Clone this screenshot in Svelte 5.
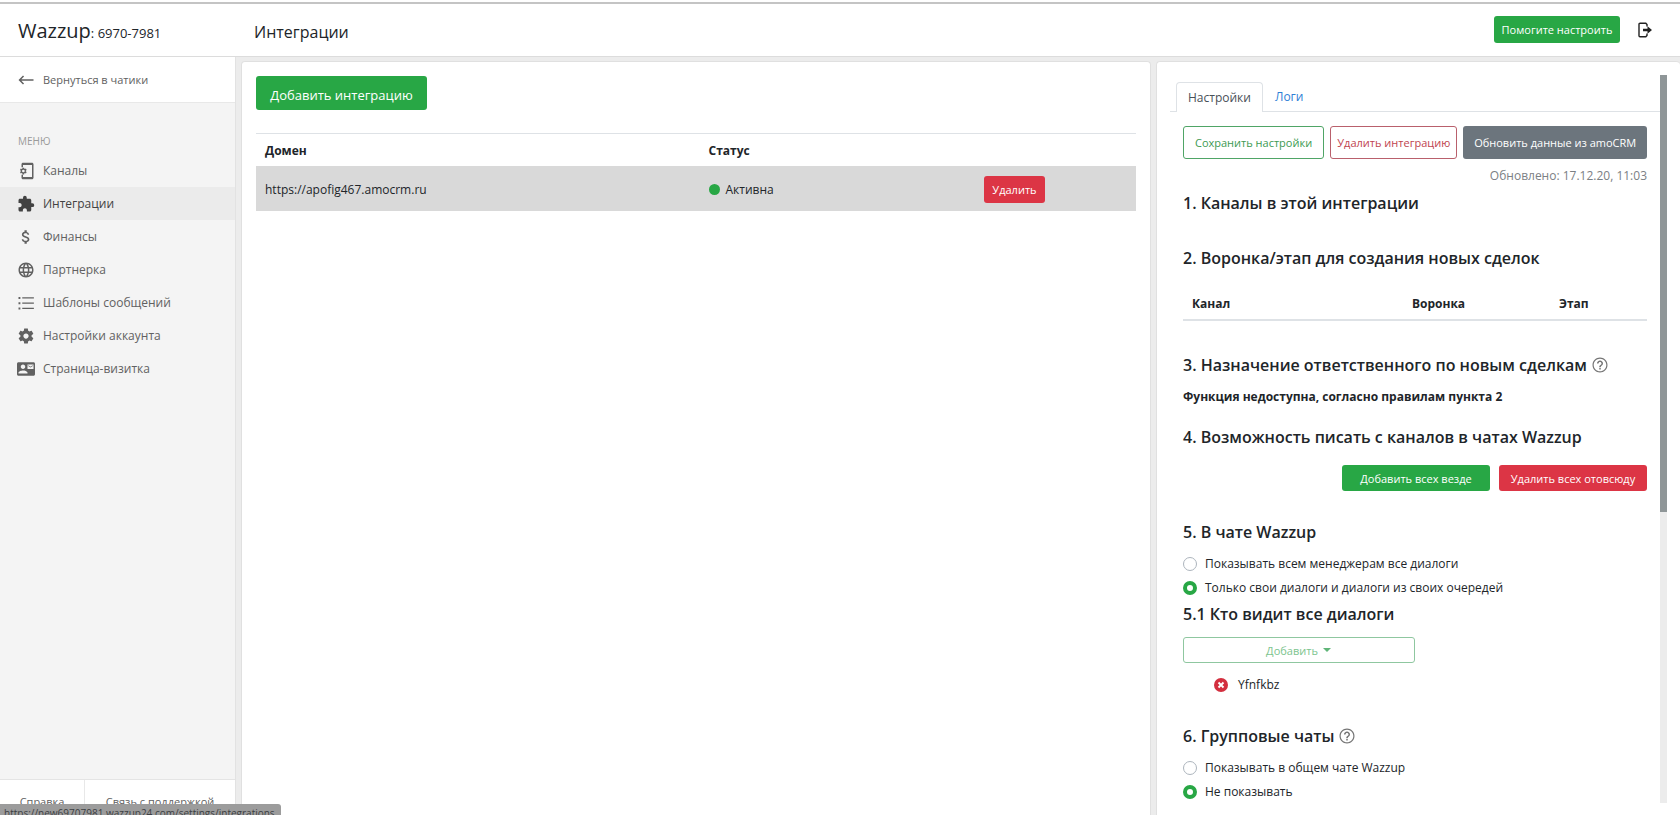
<script lang="ts">
	interface MenuItem {
		icon: string;
		label: string;
		active?: boolean;
	}

	const menu: MenuItem[] = [
		{ icon: 'phone', label: 'Каналы' },
		{ icon: 'puzzle', label: 'Интеграции', active: true },
		{ icon: 'money', label: 'Финансы' },
		{ icon: 'globe', label: 'Партнерка' },
		{ icon: 'list', label: 'Шаблоны сообщений' },
		{ icon: 'gear', label: 'Настройки аккаунта' },
		{ icon: 'card', label: 'Страница-визитка' }
	];

	// 24x24 icon paths
	const icons: Record<string, string> = {
		phone:
			'M8 1h12c1.100 0 2 .9 2 2v18c0 1.100-.9 2-2 2H8c-1.100 0-2-.9-2-2v-4h2v3h12V4H8v3H6V3c0-1.100.9-2 2-2zM11.800 12.500v-1l1.100-.8-1-1.900-1.300.5-.9-.5-.2-1.300H7.400l-.2 1.300-.9.5L5 8.800l-1 1.900 1.100.8v1L4 13.300l1 1.900 1.300-.5.9.5.2 1.300h2.100l.2-1.300.9-.5 1.300.5 1-1.900-1.100-.8zM8.500 13.800a1.800 1.800 0 1 1 0-3.600 1.800 1.800 0 0 1 0 3.600z',
		puzzle:
			'M20.500 11H19V7c0-1.100-.9-2-2-2h-4V3.500a2.500 2.500 0 0 0-5 0V5H4c-1.100 0-1.990.9-1.990 2v3.800H3.500c1.490 0 2.700 1.210 2.700 2.700s-1.210 2.700-2.700 2.700H2V20c0 1.100.9 2 2 2h3.800v-1.500c0-1.490 1.210-2.700 2.700-2.700s2.700 1.210 2.700 2.700V22H17c1.100 0 2-.9 2-2v-4h1.500a2.500 2.500 0 0 0 0-5z',
		money:
			'M11.800 10.900c-2.270-.59-3-1.200-3-2.150 0-1.090 1.010-1.850 2.700-1.850 1.780 0 2.440.85 2.500 2.100h2.210c-.07-1.720-1.120-3.300-3.210-3.810V3h-3v2.160c-1.940.42-3.500 1.680-3.500 3.610 0 2.310 1.910 3.460 4.700 4.130 2.500.6 3 1.480 3 2.410 0 .69-.49 1.790-2.700 1.790-2.060 0-2.870-.92-2.980-2.100h-2.200c.12 2.190 1.760 3.420 3.680 3.830V21h3v-2.150c1.950-.37 3.500-1.500 3.500-3.550 0-2.840-2.430-3.810-4.700-4.400z',
		globe:
			'M11.990 2C6.470 2 2 6.480 2 12s4.470 10 9.990 10C17.520 22 22 17.520 22 12S17.520 2 11.990 2zm6.930 6h-2.950c-.32-1.250-.78-2.450-1.380-3.560 1.840.63 3.370 1.910 4.330 3.560zM12 4.040c.83 1.200 1.480 2.530 1.910 3.960h-3.820c.43-1.430 1.080-2.760 1.910-3.960zM4.260 14C4.100 13.360 4 12.690 4 12s.1-1.360.26-2h3.380c-.08.66-.14 1.320-.14 2s.06 1.340.14 2H4.260zm.82 2h2.950c.32 1.250.78 2.450 1.380 3.560-1.840-.63-3.370-1.900-4.330-3.560zm2.950-8H5.080c.96-1.660 2.490-2.930 4.330-3.560C8.810 5.550 8.350 6.750 8.030 8zM12 19.960c-.83-1.200-1.480-2.530-1.910-3.960h3.820c-.43 1.430-1.080 2.760-1.910 3.960zM14.340 14H9.660c-.09-.66-.16-1.320-.16-2s.07-1.350.16-2h4.680c.09.65.16 1.320.16 2s-.07 1.340-.16 2zm.25 5.560c.6-1.110 1.060-2.310 1.380-3.560h2.950c-.96 1.650-2.490 2.930-4.330 3.560zM16.360 14c.08-.66.14-1.320.14-2s-.06-1.340-.14-2h3.380c.16.64.26 1.310.26 2s-.1 1.360-.26 2h-3.380z',
		list: 'M2 4h2.500v2.500H2zM2 11h2.500v2.500H2zM2 18h2.500v2.500H2zM7 4.300h15.500v1.800H7zM7 11.300h15.500v1.800H7zM7 18.300h15.500v1.800H7z',
		gear: 'M19.430 12.980c.04-.32.07-.64.07-.98s-.03-.66-.07-.98l2.110-1.650c.19-.15.24-.42.12-.64l-2-3.460c-.12-.22-.39-.3-.61-.22l-2.490 1c-.52-.4-1.080-.73-1.690-.98l-.38-2.650C14.460 2.180 14.250 2 14 2h-4c-.25 0-.46.18-.49.42l-.38 2.650c-.61.25-1.170.59-1.690.98l-2.490-1c-.23-.09-.49 0-.61.22l-2 3.460c-.13.22-.07.49.12.64l2.110 1.650c-.04.32-.07.65-.07.98s.03.66.07.98l-2.110 1.650c-.19.15-.24.42-.12.64l2 3.460c.12.22.39.3.61.22l2.490-1c.52.4 1.080.73 1.690.98l.38 2.650c.03.24.24.42.49.42h4c.25 0 .46-.18.49-.42l.38-2.650c.61-.25 1.170-.59 1.690-.98l2.490 1c.23.09.49 0 .61-.22l2-3.460c.12-.22.07-.49-.12-.64l-2.110-1.650zM12 15.500c-1.930 0-3.500-1.570-3.500-3.500s1.570-3.500 3.500-3.500 3.500 1.570 3.500 3.500-1.570 3.500-3.500 3.500z',
		card: 'M21 8V7l-3 2-3-2v1l3 2 3-2zm1-5H2C.9 3 0 3.900 0 5v14c0 1.100.9 2 2 2h20c1.100 0 1.990-.9 1.990-2L24 5c0-1.100-.9-2-2-2zM8 6c1.660 0 3 1.340 3 3s-1.340 3-3 3-3-1.340-3-3 1.340-3 3-3zm6 12H2v-1c0-2 4-3.100 6-3.100s6 1.100 6 3.100v1zm8-6h-8V6h8v6z',
		back: 'M22 11H5.830l3.580-3.590L8 6l-6 6 6 6 1.410-1.410L5.830 13H22z',
		help: 'M11 18h2v-2h-2v2zm1-16C6.480 2 2 6.480 2 12s4.480 10 10 10 10-4.480 10-10S17.520 2 12 2zm0 18.400c-4.600 0-8.400-3.800-8.400-8.400S7.400 3.600 12 3.600s8.400 3.800 8.400 8.400-3.800 8.400-8.400 8.400zM12 6c-2.210 0-4 1.790-4 4h2c0-1.100.9-2 2-2s2 .9 2 2c0 2-3 1.750-3 5h2c0-2.250 3-2.500 3-5 0-2.210-1.790-4-4-4z'
	};

	let dialogs = $state('own');
	let groups = $state('hide');
</script>

{#snippet icon(name: string)}
	<svg class="icon" viewBox="0 0 24 24" aria-hidden="true"><path d={icons[name]} /></svg>
{/snippet}

<div class="app">
	<header class="topbar">
		<div class="brand"><span class="brand-name">Wazzup</span>: 6970-7981</div>
		<h1 class="page-title">Интеграции</h1>
		<button type="button" class="btn btn-green btn-help">Помогите настроить</button>
		<button type="button" class="logout" aria-label="Выйти">
			<svg viewBox="0 0 16 16" aria-hidden="true">
				<path
					d="M10 4.500V2.500L8.800 1.200H3a1 1 0 0 0-1 1v11.600a1 1 0 0 0 1 1h5.800l1.200-1.300v-2"
					fill="none"
					stroke="currentColor"
					stroke-width="1.400"
				/>
				<path d="M6 6.700h4.500V4.200l4.500 3.800-4.500 3.800V9.300H6z" fill="currentColor" />
			</svg>
		</button>
	</header>

	<div class="body">
		<aside class="sidebar">
			<a href="#chats" class="back">{@render icon('back')}Вернуться в чатики</a>
			<nav class="menu">
				<div class="menu-heading">МЕНЮ</div>
				{#each menu as item}
					<a href="#{item.icon}" class="menu-item" class:active={item.active}>
						{@render icon(item.icon)}{item.label}
					</a>
				{/each}
			</nav>
			<div class="sidebar-footer">
				<a href="#help" class="footer-help">Справка</a>
				<a href="#support" class="footer-support">Связь с поддержкой</a>
			</div>
		</aside>

		<main class="panel list-panel">
			<button type="button" class="btn btn-green btn-add">Добавить интеграцию</button>
			<table class="integrations">
				<thead>
					<tr>
						<th class="col-domain">Домен</th>
						<th class="col-status">Статус</th>
						<th></th>
					</tr>
				</thead>
				<tbody>
					<tr>
						<td>https://apofig467.amocrm.ru</td>
						<td><span class="status"><i class="dot"></i>Активна</span></td>
						<td><button type="button" class="btn btn-red btn-remove">Удалить</button></td>
					</tr>
				</tbody>
			</table>
		</main>

		<section class="panel settings-panel">
			<div class="settings">
				<div class="tabs" role="tablist">
					<button type="button" role="tab" aria-selected="true" class="tab current">Настройки</button>
					<button type="button" role="tab" aria-selected="false" class="tab">Логи</button>
				</div>

				<div class="content">
					<div class="actions">
						<button type="button" class="btn btn-outline-green btn-save">Сохранить настройки</button>
						<button type="button" class="btn btn-outline-red btn-drop">Удалить интеграцию</button>
						<button type="button" class="btn btn-gray btn-refresh">Обновить данные из amoCRM</button>
					</div>
					<p class="updated">Обновлено: 17.12.20, 11:03</p>

					<h2>1. Каналы в этой интеграции</h2>

					<h2 class="funnel-title">2. Воронка/этап для создания новых сделок</h2>
					<table class="funnel">
						<thead>
							<tr>
								<th class="col-channel">Канал</th>
								<th class="col-funnel">Воронка</th>
								<th>Этап</th>
							</tr>
						</thead>
					</table>

					<h2 class="owner-title">3. Назначение ответственного по новым сделкам {@render icon('help')}</h2>
					<p class="notice">Функция недоступна, согласно правилам пункта 2</p>

					<h2 class="write-title">4. Возможность писать с каналов в чатах Wazzup</h2>
					<div class="bulk">
						<button type="button" class="btn btn-green">Добавить всех везде</button>
						<button type="button" class="btn btn-red">Удалить всех отовсюду</button>
					</div>

					<h2 class="chat-title">5. В чате Wazzup</h2>
					<div class="radios">
						<label><input type="radio" value="all" bind:group={dialogs} />Показывать всем менеджерам все диалоги</label>
						<label><input type="radio" value="own" bind:group={dialogs} />Только свои диалоги и диалоги из своих очередей</label>
					</div>

					<h2>5.1 Кто видит все диалоги</h2>
					<div class="picker">
						<select aria-label="Кто видит все диалоги">
							<option>Добавить</option>
						</select>
						<i class="caret"></i>
					</div>
					<div class="person">
						<button type="button" class="person-remove" aria-label="Убрать">
							<svg viewBox="0 0 14 14" aria-hidden="true">
								<circle cx="7" cy="7" r="7" fill="#d32f3f" />
								<path d="M4.500 4.500l5 5M9.500 4.500l-5 5" stroke="#fff" stroke-width="1.900" />
							</svg>
						</button>
						Yfnfkbz
					</div>

					<h2 class="groups-title">6. Групповые чаты {@render icon('help')}</h2>
					<div class="radios">
						<label><input type="radio" value="show" bind:group={groups} />Показывать в общем чате Wazzup</label>
						<label><input type="radio" value="hide" bind:group={groups} />Не показывать</label>
					</div>
				</div>
			</div>
			<div class="scroll-track"><div class="scroll-thumb"></div></div>
		</section>
	</div>

	<div class="status-bar">https://new69707981.wazzup24.com/settings/integrations</div>
</div>

<style>
	:global(body) {
		margin: 0;
		background: #ececec;
	}

	.app,
	.app * {
		box-sizing: border-box;
	}

	.app {
		position: relative;
		display: flex;
		flex-direction: column;
		height: 100vh;
		overflow: hidden;
		font-family: 'Open Sans', 'Noto Sans', sans-serif;
		font-size: 12px;
		line-height: 16px;
		color: #212529;
	}

	button,
	select {
		font: inherit;
	}

	.icon {
		width: 18px;
		height: 18px;
		flex-shrink: 0;
		fill: currentColor;
	}

	/* Top bar */
	.topbar {
		display: flex;
		align-items: center;
		flex-shrink: 0;
		height: 57px;
		padding: 3px 27px 0 18px;
		background: #fff;
		border-bottom: 1px solid #dcdcdc;
		box-shadow: inset 0 2px #fff, inset 0 4px #c4c4c4;
	}

	.brand {
		width: 236px;
		padding-top: 4px;
		font-size: 13px;
		line-height: 28px;
	}

	.brand-name {
		font-size: 20px;
	}

	.page-title {
		flex: 1;
		margin: 0;
		padding-top: 4px;
		font-size: 16px;
		font-weight: 400;
	}

	.btn {
		padding: 1px 0 0;
		border: 1px solid transparent;
		border-radius: 3px;
		cursor: pointer;
		color: #fff;
		font-size: 11px;
	}

	.btn-green {
		background: #28a745;
	}

	.btn-red {
		background: #dc3545;
	}

	.btn-gray {
		background: #6c757d;
	}

	.btn-outline-green {
		background: #fff;
		border-color: #4fa566;
		color: #3c9a52;
	}

	.btn-outline-red {
		background: #fff;
		border-color: #b9606c;
		color: #c04450;
	}

	.btn-help {
		width: 126px;
		height: 27px;
	}

	.logout {
		width: 16px;
		height: 16px;
		margin-left: 17px;
		padding: 0;
		border: 0;
		background: none;
		color: #212121;
		cursor: pointer;
	}

	.logout svg {
		display: block;
	}

	/* Layout */
	.body {
		display: flex;
		flex: 1;
		min-height: 0;
	}

	.panel {
		margin-top: 4px;
		background: #fff;
		border: 1px solid #e0e0e0;
		border-bottom: 0;
		border-radius: 4px 4px 0 0;
	}

	/* Sidebar */
	.sidebar {
		display: flex;
		flex-direction: column;
		flex-shrink: 0;
		width: 236px;
		margin-right: 5px;
		background: #f4f4f4;
		border-right: 1px solid #e2e2e2;
		color: #616161;
	}

	.back {
		display: flex;
		align-items: center;
		gap: 8px;
		height: 46px;
		padding: 0 17px;
		background: #fff;
		border-bottom: 1px solid #e8e8e8;
		color: inherit;
		font-size: 11px;
		text-decoration: none;
	}

	.menu {
		flex: 1;
	}

	.menu-heading {
		padding: 30px 18px 5px;
		font-size: 10px;
		color: #9a9a9a;
	}

	.menu-item {
		display: flex;
		align-items: center;
		gap: 8px;
		height: 33px;
		padding: 0 17px;
		color: inherit;
		text-decoration: none;
	}

	.menu-item.active {
		background: #ebebeb;
		color: #424242;
	}

	.sidebar-footer {
		display: flex;
		height: 36px;
		background: #fff;
		border-top: 1px solid #e4e4e4;
	}

	.sidebar-footer a {
		padding-top: 14px;
		text-align: center;
		color: inherit;
		font-size: 11px;
		text-decoration: none;
	}

	.footer-help {
		width: 85px;
		border-right: 1px solid #e8e8e8;
	}

	.footer-support {
		flex: 1;
	}

	/* Integrations list */
	.list-panel {
		flex: 1;
		padding: 14px 14px 0;
	}

	.btn-add {
		width: 171px;
		height: 34px;
		padding-top: 3px;
		font-size: 13px;
	}

	table {
		width: 100%;
		border-collapse: collapse;
		table-layout: fixed;
	}

	th {
		font-weight: 700;
		text-align: left;
	}

	.integrations {
		margin-top: 23px;
		border-top: 1px solid #dee2e6;
	}

	.integrations th {
		height: 32px;
		padding: 2px 9px 0;
	}

	.integrations td {
		height: 45px;
		padding: 3px 9px 0;
		background: #d9d9d9;
	}

	.integrations .col-domain {
		width: 50.400%;
	}

	.integrations .col-status {
		width: 31.300%;
	}

	.status {
		display: flex;
		align-items: center;
		gap: 6px;
	}

	.dot {
		width: 11px;
		height: 11px;
		border-radius: 50%;
		background: #28a745;
	}

	.btn-remove {
		width: 61px;
		height: 27px;
	}

	/* Settings panel */
	.settings-panel {
		display: flex;
		width: 524px;
		margin-left: 5px;
		padding: 13px 13px 0;
		border-right: 0;
	}

	.settings {
		flex: 1;
		overflow: auto;
		scrollbar-width: none;
	}

	.scroll-track {
		width: 7px;
		margin-bottom: 12px;
		background: #ececec;
	}

	.scroll-thumb {
		height: 60%;
		background: #8f9698;
	}

	.tabs {
		display: flex;
		padding: 7px 6px 0;
		border-bottom: 1px solid #dee2e6;
	}

	.tab {
		height: 29px;
		padding: 0 11px;
		border: 1px solid transparent;
		border-bottom: 0;
		background: none;
		color: #2f7fd6;
		cursor: pointer;
	}

	.tab.current {
		height: 30px;
		margin-bottom: -1px;
		border-color: #dee2e6;
		border-radius: 4px 4px 0 0;
		background: #fff;
		color: #495057;
	}

	.content {
		padding: 14px 13px 0;
	}

	.actions {
		display: flex;
		gap: 6px;
	}

	.actions .btn {
		height: 33px;
	}

	.btn-save {
		flex: 141;
	}

	.btn-drop {
		flex: 127;
	}

	.btn-refresh {
		flex: 184;
	}

	.updated {
		margin: 9px 0 7px;
		text-align: right;
		color: #7b8084;
	}

	h2 {
		display: flex;
		align-items: center;
		gap: 4px;
		margin: 0;
		font-size: 16px;
		line-height: 24px;
		font-weight: 600;
	}

	h2 .icon {
		color: #757575;
	}

	.funnel-title {
		margin-top: 31px;
	}

	.funnel {
		margin-top: 17px;
		border-bottom: 2px solid #dee2e6;
	}

	.funnel th {
		height: 33px;
		padding: 2px 9px 0;
	}

	.funnel .col-channel {
		width: 47.400%;
	}

	.funnel .col-funnel {
		width: 31.700%;
	}

	.owner-title {
		margin-top: 32px;
	}

	.notice {
		margin: 12px 0 0;
		font-weight: 700;
	}

	.write-title {
		margin-top: 20px;
	}

	.bulk {
		display: flex;
		justify-content: flex-end;
		gap: 9px;
		margin-top: 16px;
	}

	.bulk .btn {
		width: 148px;
		height: 26px;
	}

	.chat-title {
		margin-top: 29px;
	}

	.radios {
		margin: 8px 0 2px;
	}

	.radios label {
		display: flex;
		align-items: center;
		gap: 8px;
		height: 24px;
	}

	.radios input {
		appearance: none;
		width: 14px;
		height: 14px;
		margin: 0;
		border: 1px solid #adb5bd;
		border-radius: 50%;
		background: #fff;
	}

	.radios input:checked {
		border: 4px solid #28a745;
	}

	.picker {
		position: relative;
		width: 50%;
		margin-top: 11px;
	}

	.picker select {
		display: block;
		appearance: none;
		width: 100%;
		height: 26px;
		padding: 1px 24px 0 10px;
		border: 1px solid #8fc7a0;
		border-radius: 3px;
		background: #fff;
		color: #7cc48e;
		font-size: 11px;
		text-align: center;
		text-align-last: center;
	}

	.caret {
		position: absolute;
		top: 11px;
		left: calc(50% + 24px);
		border: 4px solid transparent;
		border-top-color: #5fb578;
		border-bottom: 0;
	}

	.person {
		display: flex;
		align-items: center;
		gap: 10px;
		margin: 14px 0 0 31px;
	}

	.person-remove {
		width: 14px;
		height: 14px;
		padding: 0;
		border: 0;
		background: none;
		cursor: pointer;
	}

	.person-remove svg {
		display: block;
	}

	.groups-title {
		margin-top: 31px;
	}

	/* Browser link preview */
	.status-bar {
		position: absolute;
		left: 0;
		bottom: 0;
		height: 11px;
		padding: 2px 6px 0 4px;
		overflow: hidden;
		border-radius: 0 3px 0 0;
		background: #9c9c9c;
		color: #3c4043;
		font-size: 10px;
		line-height: 14px;
	}
</style>
